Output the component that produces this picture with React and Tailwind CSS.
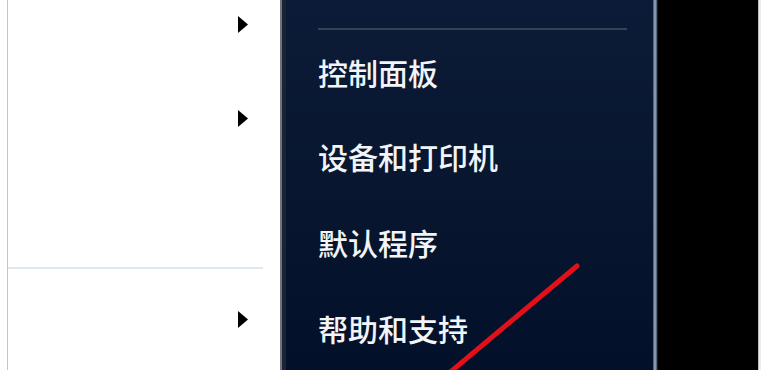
import React from "react";

function Arrow() {
  return (
    <svg width="10" height="17" viewBox="0 0 10 17" className="block">
      <polygon points="0,0 10,8.5 0,17" fill="#000" />
    </svg>
  );
}

export default function App() {
  return (
    <div className="relative flex w-[761px] h-[370px] overflow-hidden bg-white" style={{ fontFamily: '"Noto Sans CJK SC", "Noto Sans", sans-serif' }}>
      {/* Left white menu */}
      <div className="w-[280px] h-full flex bg-white">
        <div className="w-[7px] h-full bg-white" />
        <div className="w-px h-full bg-[#c4c4c4]" />
        <div className="flex-1 flex flex-col">
          <div className="h-[48px] flex items-center pl-[230px]">
            <Arrow />
          </div>
          <div className="h-[46px]" />
          <div className="h-[48px] flex items-center pl-[230px]">
            <Arrow />
          </div>
          <div className="h-[125px]" />
          <div className="h-[2px] w-[255px] bg-[#dfe7f3]" />
          <div className="h-[26px]" />
          <div className="h-[48px] flex items-center pl-[230px]">
            <Arrow />
          </div>
        </div>
      </div>

      {/* Dark panel */}
      <div className="w-[378px] h-full flex">
        <div className="w-[2px] h-full bg-[#6e747e]" />
        <div className="w-[4px] h-full bg-[#1a2233]" />
        <div className="flex-1 h-full bg-gradient-to-b from-[#0c1b37] via-[#08162f] to-[#03102a] pl-[32px] pr-[26px] flex flex-col">
          <div className="h-[29px]" />
          <div className="h-[2px] bg-[#33435a]" />
          <div className="h-[86px] flex items-center text-[30px] leading-none font-medium text-[#f2f4f7] whitespace-nowrap">控制面板</div>
          <div className="h-[87px] flex items-center text-[30px] leading-none font-medium text-[#f2f4f7] whitespace-nowrap">设备和打印机</div>
          <div className="h-[90px] flex items-center text-[30px] leading-none font-medium text-[#f2f4f7] whitespace-nowrap">默认程序</div>
          <div className="h-[86px] flex items-center text-[30px] leading-none font-medium text-[#f2f4f7] whitespace-nowrap">帮助和支持</div>
        </div>
        <div className="w-[1px] h-full bg-[#56667e]" />
        <div className="w-[2px] h-full bg-[#8496ad]" />
        <div className="w-[1px] h-full bg-[#56667e]" />
        <div className="w-[1px] h-full bg-[#1a1d24]" />
      </div>

      {/* Black area */}
      <div className="w-[100px] h-full bg-black" />
      <div className="w-[1px] h-full bg-[#bdbdbd]" />
      <div className="w-[2px] h-full bg-[#ececec]" />

      {/* Red annotation stroke */}
      <svg className="absolute left-0 top-0 pointer-events-none" width="761" height="370">
        <line x1="577" y1="266" x2="448" y2="374" stroke="#e3101a" strokeWidth="5" strokeLinecap="round" />
      </svg>
    </div>
  );
}
